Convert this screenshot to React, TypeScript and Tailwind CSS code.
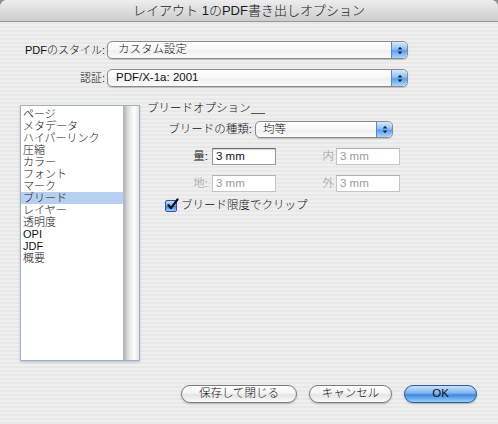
import React from "react";

function Stepper() {
  return (
    <div className="w-[16px] h-full rounded-r-[5px] border-l border-[#5f86c0] bg-[linear-gradient(to_bottom,#d6e9fc,#8fc0f3_45%,#5a9ff0_55%,#a9d7fb)] flex items-center justify-center">
      <svg width="6" height="9" viewBox="0 0 6 9">
        <path d="M3 0.8 L5.4 3.6 H0.6 Z" fill="#10204a" />
        <path d="M3 8.2 L5.4 5.4 H0.6 Z" fill="#10204a" />
      </svg>
    </div>
  );
}

function Popup({ text, w, h, pl }: { text: string; w: string; h: string; pl: string }) {
  return (
    <div
      className={`${w} ${h} flex rounded-[5px] border border-[#8a8a8a] bg-[linear-gradient(to_bottom,#ffffff,#f7f7f7_50%,#efefef_51%,#fbfbfb)] shadow-[0_1px_1px_rgba(0,0,0,0.18)] overflow-hidden`}
    >
      <div className={`flex-1 flex items-center ${pl} text-[11.5px] text-[#111] leading-none`}>{text}</div>
      <Stepper />
    </div>
  );
}

function Field({ value, disabled }: { value: string; disabled?: boolean }) {
  return (
    <div
      className={`w-[64px] h-[17px] flex items-center pl-[3px] bg-white text-[11.5px] leading-none border ${
        disabled
          ? "border-[#c4c4c4] border-t-[#b0b0b0] text-[#9a9a9a]"
          : "border-[#9a9a9a] border-t-[#6c6c6c] text-[#111] shadow-[inset_0_1px_1px_rgba(0,0,0,0.15)]"
      }`}
    >
      {value}
    </div>
  );
}

function Button({ label, w, primary }: { label: string; w: string; primary?: boolean }) {
  return (
    <div
      className={`${w} h-[18px] rounded-full flex items-center justify-center text-[11.5px] leading-none text-[#111] border shadow-[0_1px_2px_rgba(0,0,0,0.25)] ${
        primary
          ? "border-[#2c5a9c] bg-[linear-gradient(to_bottom,#c9e2fb,#7db4ee_45%,#3f88e2_55%,#94d2fc)]"
          : "border-[#7c7c7c] bg-[linear-gradient(to_bottom,#ffffff,#f5f5f5_45%,#e4e4e4_55%,#fbfbfb)]"
      }`}
    >
      {label}
    </div>
  );
}

const items = [
  "ページ",
  "メタデータ",
  "ハイパーリンク",
  "圧縮",
  "カラー",
  "フォント",
  "マーク",
  "ブリード",
  "レイヤー",
  "透明度",
  "OPI",
  "JDF",
  "概要",
];

export default function App() {
  return (
    <div className="w-[498px] h-[424px] bg-[#8e8e8e] font-light font-['Liberation_Sans','Noto_Sans_CJK_JP',sans-serif]">
      <div className="w-full h-full rounded-t-[7px] overflow-hidden flex flex-col bg-[repeating-linear-gradient(to_bottom,#efefef_0px,#efefef_2px,#e8e8e8_2px,#e8e8e8_4px)]">
        {/* Title bar */}
        <div className="h-[22px] shrink-0 border-b border-[#979797] bg-[linear-gradient(to_bottom,#ededed,#dadada_60%,#cdcdcd)] flex items-center justify-center text-[13px] text-[#1a1a1a] leading-none">
          レイアウト 1のPDF書き出しオプション
        </div>

        {/* Popup rows */}
        <div className="mt-[19px] flex items-center h-[18px]">
          <div className="w-[105px] text-right text-[11px] leading-none text-[#111]">PDFのスタイル:</div>
          <div className="ml-[2px]">
            <Popup text="カスタム設定" w="w-[301px]" h="h-[18px]" pl="pl-[10px]" />
          </div>
        </div>
        <div className="mt-[10px] flex items-center h-[18px]">
          <div className="w-[105px] text-right text-[11px] leading-none text-[#111]">認証:</div>
          <div className="ml-[2px]">
            <Popup text="PDF/X-1a: 2001" w="w-[301px]" h="h-[18px]" pl="pl-[8px]" />
          </div>
        </div>

        {/* Main area */}
        <div className="mt-[15px] flex items-start">
          {/* List box */}
          <div className="ml-[20px] mt-[3px] w-[120px] h-[256px] flex border border-[#9fb0c4] bg-white shadow-[0_1px_2px_rgba(80,110,150,0.35)]">
            <div className="flex-1 pt-[2px] flex flex-col">
              {items.map((it) => (
                <div
                  key={it}
                  className={`h-[12px] flex items-center pl-[2px] text-[11px] leading-none text-[#111] ${
                    it === "ブリード" ? "bg-[#b7cff0]" : ""
                  }`}
                >
                  {it}
                </div>
              ))}
            </div>
            <div className="w-[16px] h-full border-l border-[#b9b9b9] bg-[linear-gradient(to_right,#b4b4b4,#dcdcdc_25%,#f6f6f6_55%,#fdfdfd_70%,#e2e2e2)]" />
          </div>

          {/* Right panel */}
          <div className="ml-[7px] flex flex-col">
            <div className="h-[14px] flex items-center">
              <span className="text-[11.5px] leading-none text-[#111]">ブリードオプション</span>
              <div className="w-[14px] h-px bg-[#555] mt-[9px]" />
            </div>

            <div className="mt-[5px] flex items-center h-[17px]">
              <div className="w-[105px] text-right text-[11.5px] leading-none text-[#111]">ブリードの種類:</div>
              <div className="ml-[3px]">
                <Popup text="均等" w="w-[138px]" h="h-[17px]" pl="pl-[7px]" />
              </div>
            </div>

            <div className="mt-[10px] flex items-center">
              <div className="w-[61px] text-right text-[11.5px] leading-none text-[#111]">量:</div>
              <div className="ml-[4px]">
                <Field value="3 mm" />
              </div>
              <div className="w-[60px] text-right pr-[2px] text-[11.5px] leading-none text-[#9a9a9a]">内</div>
              <Field value="3 mm" disabled />
            </div>

            <div className="mt-[10px] flex items-center">
              <div className="w-[61px] text-right text-[11.5px] leading-none text-[#9a9a9a]">地:</div>
              <div className="ml-[4px]">
                <Field value="3 mm" disabled />
              </div>
              <div className="w-[60px] text-right pr-[2px] text-[11.5px] leading-none text-[#9a9a9a]">外</div>
              <Field value="3 mm" disabled />
            </div>

            <div className="mt-[7px] ml-[18px] flex items-center h-[13px]">
              <div className="w-[12px] h-[12px] rounded-[2px] border border-[#30579a] bg-[linear-gradient(to_bottom,#c3defb,#6ea8ec_50%,#3f86e0_55%,#9fd5fb)] relative">
                <svg className="absolute left-[0px] top-[-3px]" width="13" height="13" viewBox="0 0 13 13">
                  <path d="M2.5 7.2 L5 10.2 L11.5 1.5" stroke="#111" strokeWidth="2.2" fill="none" strokeLinecap="round" strokeLinejoin="round" />
                </svg>
              </div>
              <span className="ml-[4px] text-[11.5px] leading-none text-[#111]">ブリード限度でクリップ</span>
            </div>
          </div>
        </div>

        {/* Buttons */}
        <div className="mt-[24px] flex justify-end pr-[21px] gap-[12px]">
          <Button label="保存して閉じる" w="w-[116px]" />
          <Button label="キャンセル" w="w-[83px]" />
          <Button label="OK" w="w-[73px]" primary />
        </div>
      </div>
    </div>
  );
}
